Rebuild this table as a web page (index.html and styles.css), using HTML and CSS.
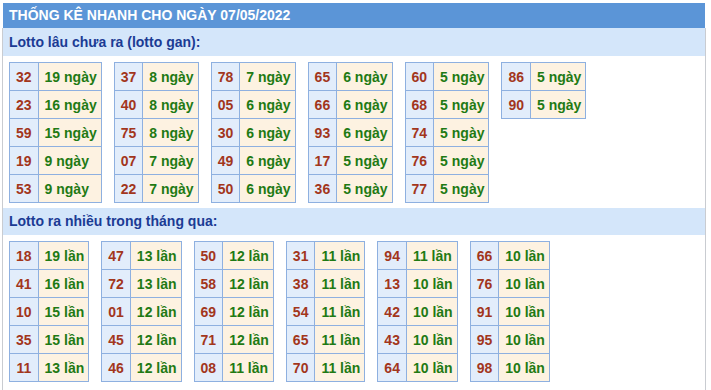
FILE: index.html
```html
<!DOCTYPE html>
<html lang="vi">
<head>
<meta charset="utf-8">
<title>Thống kê nhanh</title>
<link rel="stylesheet" href="styles.css">
</head>
<body>
<div class="wrap">
  <div class="head">THỐNG KÊ NHANH CHO NGÀY 07/05/2022</div>
  <div class="box">
    <div class="sub">Lotto lâu chưa ra (lotto gan):</div>
    <div class="tables first">
      <table class="lt"><tr><td class="n">32</td><td class="v">19 ngày</td></tr><tr><td class="n">23</td><td class="v">16 ngày</td></tr><tr><td class="n">59</td><td class="v">15 ngày</td></tr><tr><td class="n">19</td><td class="v">9 ngày</td></tr><tr><td class="n">53</td><td class="v">9 ngày</td></tr></table>
      <table class="lt"><tr><td class="n">37</td><td class="v">8 ngày</td></tr><tr><td class="n">40</td><td class="v">8 ngày</td></tr><tr><td class="n">75</td><td class="v">8 ngày</td></tr><tr><td class="n">07</td><td class="v">7 ngày</td></tr><tr><td class="n">22</td><td class="v">7 ngày</td></tr></table>
      <table class="lt"><tr><td class="n">78</td><td class="v">7 ngày</td></tr><tr><td class="n">05</td><td class="v">6 ngày</td></tr><tr><td class="n">30</td><td class="v">6 ngày</td></tr><tr><td class="n">49</td><td class="v">6 ngày</td></tr><tr><td class="n">50</td><td class="v">6 ngày</td></tr></table>
      <table class="lt"><tr><td class="n">65</td><td class="v">6 ngày</td></tr><tr><td class="n">66</td><td class="v">6 ngày</td></tr><tr><td class="n">93</td><td class="v">6 ngày</td></tr><tr><td class="n">17</td><td class="v">5 ngày</td></tr><tr><td class="n">36</td><td class="v">5 ngày</td></tr></table>
      <table class="lt"><tr><td class="n">60</td><td class="v">5 ngày</td></tr><tr><td class="n">68</td><td class="v">5 ngày</td></tr><tr><td class="n">74</td><td class="v">5 ngày</td></tr><tr><td class="n">76</td><td class="v">5 ngày</td></tr><tr><td class="n">77</td><td class="v">5 ngày</td></tr></table>
      <table class="lt"><tr><td class="n">86</td><td class="v">5 ngày</td></tr><tr><td class="n">90</td><td class="v">5 ngày</td></tr></table>
    </div>
    <div class="sub second">Lotto ra nhiều trong tháng qua:</div>
    <div class="tables">
      <table class="lt"><tr><td class="n">18</td><td class="v">19 lần</td></tr><tr><td class="n">41</td><td class="v">16 lần</td></tr><tr><td class="n">10</td><td class="v">15 lần</td></tr><tr><td class="n">35</td><td class="v">15 lần</td></tr><tr><td class="n">11</td><td class="v">13 lần</td></tr></table>
      <table class="lt"><tr><td class="n">47</td><td class="v">13 lần</td></tr><tr><td class="n">72</td><td class="v">13 lần</td></tr><tr><td class="n">01</td><td class="v">12 lần</td></tr><tr><td class="n">45</td><td class="v">12 lần</td></tr><tr><td class="n">46</td><td class="v">12 lần</td></tr></table>
      <table class="lt"><tr><td class="n">50</td><td class="v">12 lần</td></tr><tr><td class="n">58</td><td class="v">12 lần</td></tr><tr><td class="n">69</td><td class="v">12 lần</td></tr><tr><td class="n">71</td><td class="v">12 lần</td></tr><tr><td class="n">08</td><td class="v">11 lần</td></tr></table>
      <table class="lt"><tr><td class="n">31</td><td class="v">11 lần</td></tr><tr><td class="n">38</td><td class="v">11 lần</td></tr><tr><td class="n">54</td><td class="v">11 lần</td></tr><tr><td class="n">65</td><td class="v">11 lần</td></tr><tr><td class="n">70</td><td class="v">11 lần</td></tr></table>
      <table class="lt"><tr><td class="n">94</td><td class="v">11 lần</td></tr><tr><td class="n">13</td><td class="v">10 lần</td></tr><tr><td class="n">42</td><td class="v">10 lần</td></tr><tr><td class="n">43</td><td class="v">10 lần</td></tr><tr><td class="n">64</td><td class="v">10 lần</td></tr></table>
      <table class="lt"><tr><td class="n">66</td><td class="v">10 lần</td></tr><tr><td class="n">76</td><td class="v">10 lần</td></tr><tr><td class="n">91</td><td class="v">10 lần</td></tr><tr><td class="n">95</td><td class="v">10 lần</td></tr><tr><td class="n">98</td><td class="v">10 lần</td></tr></table>
    </div>
  </div>
</div>
</body>
</html>
```
FILE: styles.css
```css
html, body {
  margin: 0;
  padding: 0;
  background: #ffffff;
}
body {
  font-family: Arial, "Liberation Sans", sans-serif;
  font-weight: bold;
  font-size: 14px;
}
.wrap {
  margin: 3px 0 0 3px;
  width: 702px;
}
.head {
  background: #5b95d7;
  color: #ffffff;
  height: 25px;
  line-height: 25px;
  padding-left: 6px;
  font-size: 14px;
}
.box {
  margin: 0 -1px;
  border-left: 1px solid #c9ccd1;
  border-right: 1px solid #c9ccd1;
  padding-bottom: 8px;
}
.sub {
  background: #d4e6fa;
  color: #1b3b94;
  height: 28px;
  line-height: 28px;
  padding-left: 6px;
}
.sub.second {
  height: 27px;
  line-height: 27px;
}
.tables {
  display: flex;
  align-items: flex-start;
  gap: 12px;
  padding: 6px 0 6px 6px;
}
.tables.first {
  padding-bottom: 5px;
}
.lt {
  border-collapse: collapse;
}
.lt td {
  border: 1px solid #8eb0e0;
  height: 27px;
  padding: 0 6px;
  white-space: nowrap;
}
.lt .n {
  background: #e2edfb;
  color: #a2361c;
  text-align: center;
}
.lt .v {
  background: #fdf2e1;
  color: #1f7a14;
  padding: 0 4px 0 6px;
}
```
